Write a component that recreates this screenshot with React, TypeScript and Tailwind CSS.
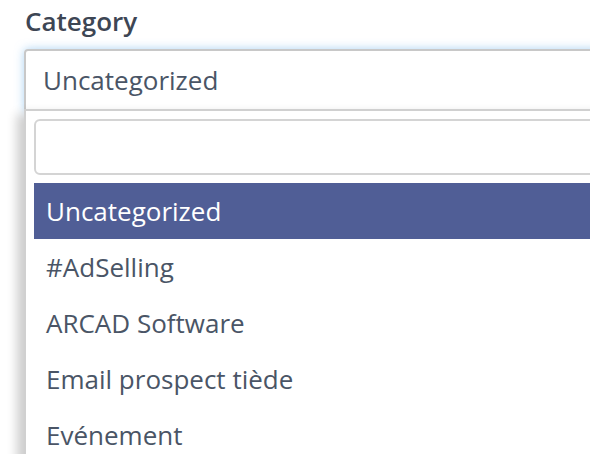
import React from 'react';

const items = ['Uncategorized', '#AdSelling', 'ARCAD Software', 'Email prospect tiède', 'Evénement'];

export default function App() {
  return (
    <div className="h-[454px] w-[590px] overflow-hidden bg-white font-['Open_Sans',sans-serif]">
      <div className="pl-[25px] pt-[3px] text-[26px] font-semibold leading-[36px] text-[#3d4654]">
        Category
      </div>

      <div className="ml-[24px] mt-[10px] w-[700px]">
        {/* selected value */}
        <div className="flex h-[62px] items-center rounded-tl-[4px] border-2 border-[#c8c8c8] pl-[17px] text-[26px] text-[#4a5566] shadow-[0_0_10px_rgba(102,175,233,0.55)]">
          Uncategorized
        </div>

        {/* dropdown */}
        <div className="relative -mt-[2px] border-l-2 border-t-2 border-[#d0d0d0] bg-white pl-[8px] pt-[8px] shadow-[-7px_5px_10px_rgba(0,0,0,0.2)]">
          <input
            className="block h-[56px] w-full rounded-[6px] border-2 border-[#d4d4d4] outline-none"
            aria-label="Search"
          />
          <ul className="mt-[8px]">
            {items.map((item, i) => (
              <li
                key={item}
                className={
                  i === 0
                    ? 'flex h-[56px] items-center bg-[#505e96] pl-[12px] text-[26px] text-white'
                    : 'flex h-[56px] items-center pl-[12px] text-[26px] text-[#4a5566]'
                }
              >
                {item}
              </li>
            ))}
          </ul>
        </div>
      </div>
    </div>
  );
}
